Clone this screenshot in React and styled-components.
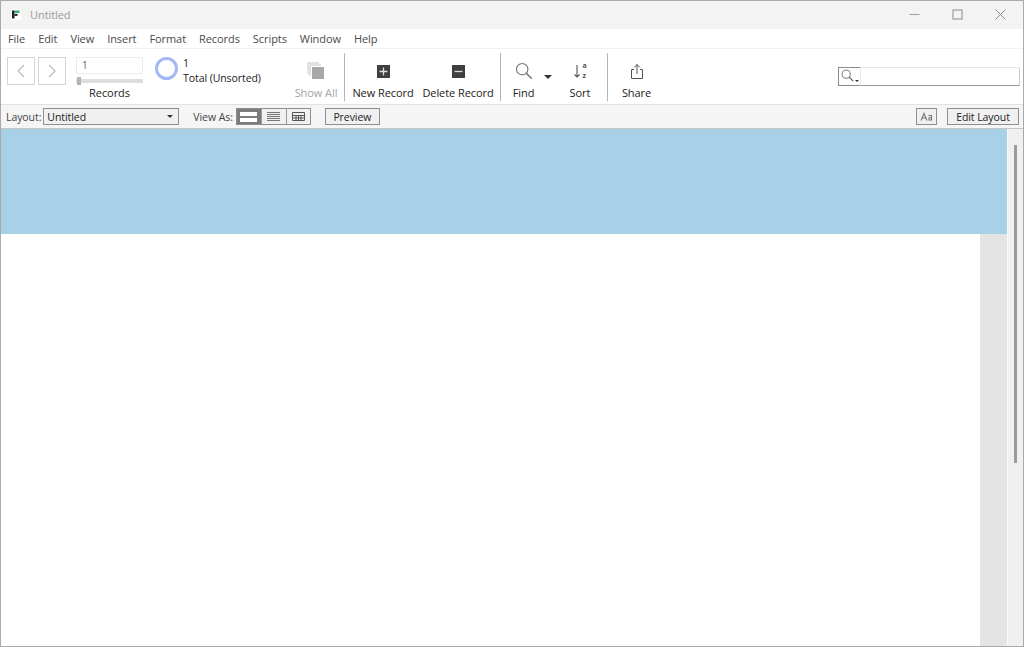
import React from "react";
import styled, { createGlobalStyle } from "styled-components";

const Global = createGlobalStyle`
  html, body { margin: 0; padding: 0; height: 100%; background: #fff; }
  #root { height: 100%; }
`;
const Win = styled.div`
  width: 1024px; height: 647px; box-sizing: border-box; overflow: hidden;
  border: 1px solid #a9a9a9;
  display: flex; flex-direction: column;
  font-family: "Open Sans", "Noto Sans", sans-serif; font-size: 11px; color: #222; background: #fff;
  letter-spacing: -0.07px;
`;
const TitleBar = styled.div`
  height: 28px; flex: none; box-sizing: border-box; background: #f3f3f3; display: flex; align-items: center; padding: 0 1px 2px 10px;
`;
const TitleText = styled.span`
  margin-left: 9px; font-size: 11px; color: #9a9a9a; flex: 1;
`;
const WinButton = styled.div`
  width: 43px; height: 26px; display: flex; align-items: center; justify-content: center;
`;
const MenuBar = styled.div`
  height: 19px; flex: none; background: #fff; display: flex; align-items: center; padding-left: 7px; gap: 13px; color: #4a4a4a; font-size: 11px;
`;
const Toolbar = styled.div`
  height: 57px; flex: none; box-sizing: border-box; background: #fff; border-top: 1px solid #f0f0f0; border-bottom: 1px solid #e2e2e2;
  display: flex; align-items: stretch; padding-left: 6px;
`;
const NavGroup = styled.div`
  display: flex; gap: 3px; padding-top: 8px; width: 69px; flex: none;
`;
const NavButton = styled.div`
  width: 26px; height: 26px; border: 1px solid #d4d4d4; background: #fff; display: flex; align-items: center; justify-content: center;
`;
const RecordsGroup = styled.div`
  width: 67px; flex: none; display: flex; flex-direction: column; padding-top: 8px; box-sizing: border-box;
`;
const RecordInput = styled.div`
  height: 15px; border: 1px solid #ececec; padding-left: 5px; line-height: 14px; font-size: 10px; color: #6a5a80;
`;
const Slider = styled.div`
  height: 4px; margin-top: 5px; background: #dedede; position: relative;
`;
const Thumb = styled.div`
  position: absolute; left: 1px; top: -2px; width: 4px; height: 8px; background: #b5b5b5;
`;
const ToolLabel = styled.div`
  color: ${p => (p.$dim ? "#a4a4a4" : "#222")}; font-size: 11px; text-align: center; white-space: nowrap;
  line-height: 14px;
`;
const RecordsLabel = styled(ToolLabel)`
  margin-top: 3px;
`;
const FoundGroup = styled.div`
  margin-left: 12px; width: 133px; flex: none; display: flex; gap: 5px; padding-top: 7px; box-sizing: border-box;
`;
const Ring = styled.div`
  width: 17px; height: 17px; flex: none; border: 3px solid #a3b8f5; border-radius: 50%; margin-top: 1px; background: #fff;
`;
const FoundText = styled.div`
  font-size: 10.5px; line-height: 15px; color: #222; white-space: nowrap;
`;
const Tool = styled.div`
  width: ${p => p.$w}px; margin-left: ${p => p.$ml || 0}px; margin-right: ${p => p.$mr || 0}px;
  flex: none; display: flex; flex-direction: column; align-items: center; position: relative;
`;
const ToolIcon = styled.div`
  height: 30px; margin-top: 7px; flex: none; display: flex; align-items: center; justify-content: center;
`;
const SortLetters = styled.div`
  display: flex; flex-direction: column; margin-left: 1px; font-size: 7px; line-height: 10px; font-weight: 700; color: #555;
`;
const Sep = styled.div`
  width: 1px; flex: none; background: #b4b4b4; margin: 4px 0 3px;
`;
const Caret = styled.div`
  position: absolute; right: ${p => p.$r}px; top: ${p => p.$t}px; width: 0; height: 0;
  border-left: ${p => p.$s}px solid transparent; border-right: ${p => p.$s}px solid transparent; border-top: ${p => p.$s}px solid #333;
`;
const SearchBox = styled.div`
  margin: 18px 3px 0 auto; height: 19px; width: 182px; box-sizing: border-box; display: flex; flex: none;
`;
const SearchIcon = styled.div`
  width: 22px; flex: none; box-sizing: border-box; border: 1px solid #8a8a8a; border-right: 0; position: relative; background: #fff; padding: 1px 0 0 2px;
`;
const SearchField = styled.div`
  flex: 1; box-sizing: border-box; border: 1px solid #e8e8e8; border-bottom: 1px solid #999; border-right: 1px solid #ccc;
`;
const LayoutBar = styled.div`
  height: 24px; flex: none; box-sizing: border-box; background: #f5f5f6; border-bottom: 1px solid #c4c4c4;
  display: flex; align-items: center; padding-left: 5px; color: #444; font-size: 10.5px;
`;
const LayoutSelect = styled.div`
  margin-left: 2px; width: 136px; height: 17px; box-sizing: border-box; border: 1px solid #8e8e8e; background: #f0f0f0;
  display: flex; align-items: center; padding-left: 3px; color: #222; position: relative;
`;
const ViewLabel = styled.span`
  margin-left: 14px; margin-right: 3px;
`;
const ViewSeg = styled.div`
  display: flex; height: 17px; box-sizing: border-box; border: 1px solid #8e8e8e;
`;
const ViewBtn = styled.div`
  width: ${p => p.$w}px; box-sizing: border-box; background: ${p => (p.$on ? "#7b7b7b" : "#f0f0f0")}; display: flex; align-items: center; justify-content: center;
  border-right: ${p => (p.$last ? 0 : "1px solid #9a9a9a")};
`;
const BarButton = styled.div`
  height: 17px; box-sizing: border-box; border: 1px solid #8e8e8e; background: #f0f0f0; color: #222;
  width: ${p => p.$w}px; margin-left: ${p => p.$ml || "0"}; margin-right: ${p => p.$mr || "0"};
  display: flex; align-items: center; justify-content: center; font-size: 10.5px;
`;
const Body = styled.div`
  flex: 1; min-height: 0; display: flex;
`;
const Main = styled.div`
  flex: 1; display: flex; flex-direction: column; min-width: 0;
`;
const HeaderPart = styled.div`
  height: 105px; flex: none; background: #a8d1e8;
`;
const BodyPart = styled.div`
  flex: 1; display: flex; background: #fff;
`;
const Blank = styled.div` flex: 1; `;
const Gutter = styled.div`
  width: 27px; flex: none; background: #e4e4e4;
`;
const Scrollbar = styled.div`
  width: 16px; flex: none; box-sizing: border-box; background: #f0f0f0; border-left: 1px solid #fafafa;
  display: flex; justify-content: center; padding-top: 16px;
`;
const ScrollThumb = styled.div`
  width: 3px; height: 318px; background: #9a9a9a;
`;

const Logo = () => (
  <svg width="10" height="11" viewBox="0 0 10 11">
    <rect width="10" height="11" fill="#fff" />
    <rect x="1" y="1.5" width="2.5" height="8" fill="#222" />
    <rect x="3.5" y="1.5" width="5" height="2.4" fill="#1fb36a" />
    <rect x="3.5" y="4.9" width="3" height="2" fill="#222" />
  </svg>
);
const Chevron = ({ dir }) => (
  <svg width="12" height="16" viewBox="0 0 12 16" fill="none" stroke="#c2c2c2" strokeWidth="1.4">
    <path d={dir === "l" ? "M9 2 L3 8 L9 14" : "M3 2 L9 8 L3 14"} />
  </svg>
);
const Lens = ({ size = 18, color = "#777" }) => (
  <svg width={size} height={size} viewBox="0 0 18 18" fill="none" stroke={color} strokeWidth="1.1">
    <circle cx="7.2" cy="7.2" r="5.7" />
    <path d="M11.4 11.4 L16.8 16.8" strokeWidth="1.5" />
  </svg>
);

export default function App() {
  return (
    <Win>
      <Global />
      <TitleBar>
        <Logo />
        <TitleText>Untitled</TitleText>
        <WinButton>
          <svg width="11" height="11" viewBox="0 0 11 11"><path d="M0.5 5.5H10.5" stroke="#a0a0a0" /></svg>
        </WinButton>
        <WinButton>
          <svg width="11" height="11" viewBox="0 0 11 11"><rect x="1" y="1" width="9" height="9" fill="none" stroke="#8c8c8c" /></svg>
        </WinButton>
        <WinButton>
          <svg width="11" height="11" viewBox="0 0 11 11"><path d="M0.5 0.5L10.5 10.5M10.5 0.5L0.5 10.5" stroke="#8c8c8c" /></svg>
        </WinButton>
      </TitleBar>
      <MenuBar>
        {["File", "Edit", "View", "Insert", "Format", "Records", "Scripts", "Window", "Help"].map(m => (
          <span key={m}>{m}</span>
        ))}
      </MenuBar>
      <Toolbar>
        <NavGroup>
          <NavButton><Chevron dir="l" /></NavButton>
          <NavButton><Chevron dir="r" /></NavButton>
        </NavGroup>
        <RecordsGroup>
          <RecordInput>1</RecordInput>
          <Slider><Thumb /></Slider>
          <RecordsLabel>Records</RecordsLabel>
        </RecordsGroup>
        <FoundGroup>
          <Ring />
          <FoundText>1<br />Total (Unsorted)</FoundText>
        </FoundGroup>
        <Tool $w="56">
          <ToolIcon>
            <svg width="18" height="18" viewBox="0 0 18 18">
              <path d="M1 12V1H12M3 14V3H14" fill="none" stroke="#c4c4c4" />
              <rect x="5" y="5" width="12" height="12" fill="#a8a8a8" />
            </svg>
          </ToolIcon>
          <ToolLabel $dim>Show All</ToolLabel>
        </Tool>
        <Sep />
        <Tool $w="76">
          <ToolIcon>
            <svg width="13" height="13" viewBox="0 0 13 13">
              <rect width="13" height="13" fill="#3f3f3f" />
              <path d="M6.5 2.5V10.5M2.5 6.5H10.5" stroke="#ddd" strokeWidth="1.3" />
            </svg>
          </ToolIcon>
          <ToolLabel>New Record</ToolLabel>
        </Tool>
        <Tool $w="74" $mr="5">
          <ToolIcon>
            <svg width="13" height="13" viewBox="0 0 13 13">
              <rect width="13" height="13" fill="#3f3f3f" />
              <path d="M2.5 6.5H10.5" stroke="#ddd" strokeWidth="1.3" />
            </svg>
          </ToolIcon>
          <ToolLabel>Delete Record</ToolLabel>
        </Tool>
        <Sep />
        <Tool $w="45">
          <ToolIcon><Lens /></ToolIcon>
          <ToolLabel>Find</ToolLabel>
          <Caret $r="-6" $t="26" $s="4" />
        </Tool>
        <Tool $w="54" $ml="7">
          <ToolIcon>
            <svg width="8" height="16" viewBox="0 0 8 16" fill="none" stroke="#555" strokeWidth="1.1">
              <path d="M4 2V14M1.5 11.5L4 14L6.5 11.5" />
            </svg>
            <SortLetters><span>a</span><span>z</span></SortLetters>
          </ToolIcon>
          <ToolLabel>Sort</ToolLabel>
        </Tool>
        <Sep />
        <Tool $w="57">
          <ToolIcon>
            <svg width="14" height="17" viewBox="0 0 14 17" fill="none" stroke="#555" strokeWidth="1">
              <path d="M4 6.5H1.5V15.5H12.5V6.5H10" />
              <path d="M7 11V1.5M4 4.5L7 1.5L10 4.5" />
            </svg>
          </ToolIcon>
          <ToolLabel>Share</ToolLabel>
        </Tool>
        <SearchBox>
          <SearchIcon>
            <Lens size={13} color="#555" />
            <Caret $r="1" $t="12" $s="2" />
          </SearchIcon>
          <SearchField />
        </SearchBox>
      </Toolbar>
      <LayoutBar>
        Layout:
        <LayoutSelect>
          Untitled
          <Caret $r="5" $t="6" $s="3" />
        </LayoutSelect>
        <ViewLabel>View As:</ViewLabel>
        <ViewSeg>
          <ViewBtn $w="25" $on>
            <svg width="17" height="10" viewBox="0 0 17 10"><rect y="0" width="17" height="4" fill="#fff" /><rect y="6" width="17" height="4" fill="#fff" /></svg>
          </ViewBtn>
          <ViewBtn $w="25">
            <svg width="13" height="9" viewBox="0 0 13 9"><path d="M0 .5H13M0 2.5H13M0 4.5H13M0 6.5H13M0 8.5H13" stroke="#777" /></svg>
          </ViewBtn>
          <ViewBtn $w="23" $last>
            <svg width="13" height="9" viewBox="0 0 13 9" fill="none" stroke="#555"><path d="M.5 .5H12.5V8.5H.5ZM.5 3.5H12.5M.5 6H12.5M4 3.5V8.5M6.5 3.5V8.5M9 3.5V8.5" /></svg>
          </ViewBtn>
        </ViewSeg>
        <BarButton $w="55" $ml="14px">Preview</BarButton>
        <BarButton $w="21" $ml="auto">
          <svg width="13" height="10" viewBox="0 0 13 10" fill="none" stroke="#777" strokeWidth="1.1"><path d="M1 8.5L4 1.5L7 8.5M2 6H6M8.5 3.5H11.5V8H9V5.7H11.5" /></svg>
        </BarButton>
        <BarButton $w="72" $ml="10px" $mr="4px">Edit Layout</BarButton>
      </LayoutBar>
      <Body>
        <Main>
          <HeaderPart />
          <BodyPart>
            <Blank />
            <Gutter />
          </BodyPart>
        </Main>
        <Scrollbar><ScrollThumb /></Scrollbar>
      </Body>
    </Win>
  );
}
